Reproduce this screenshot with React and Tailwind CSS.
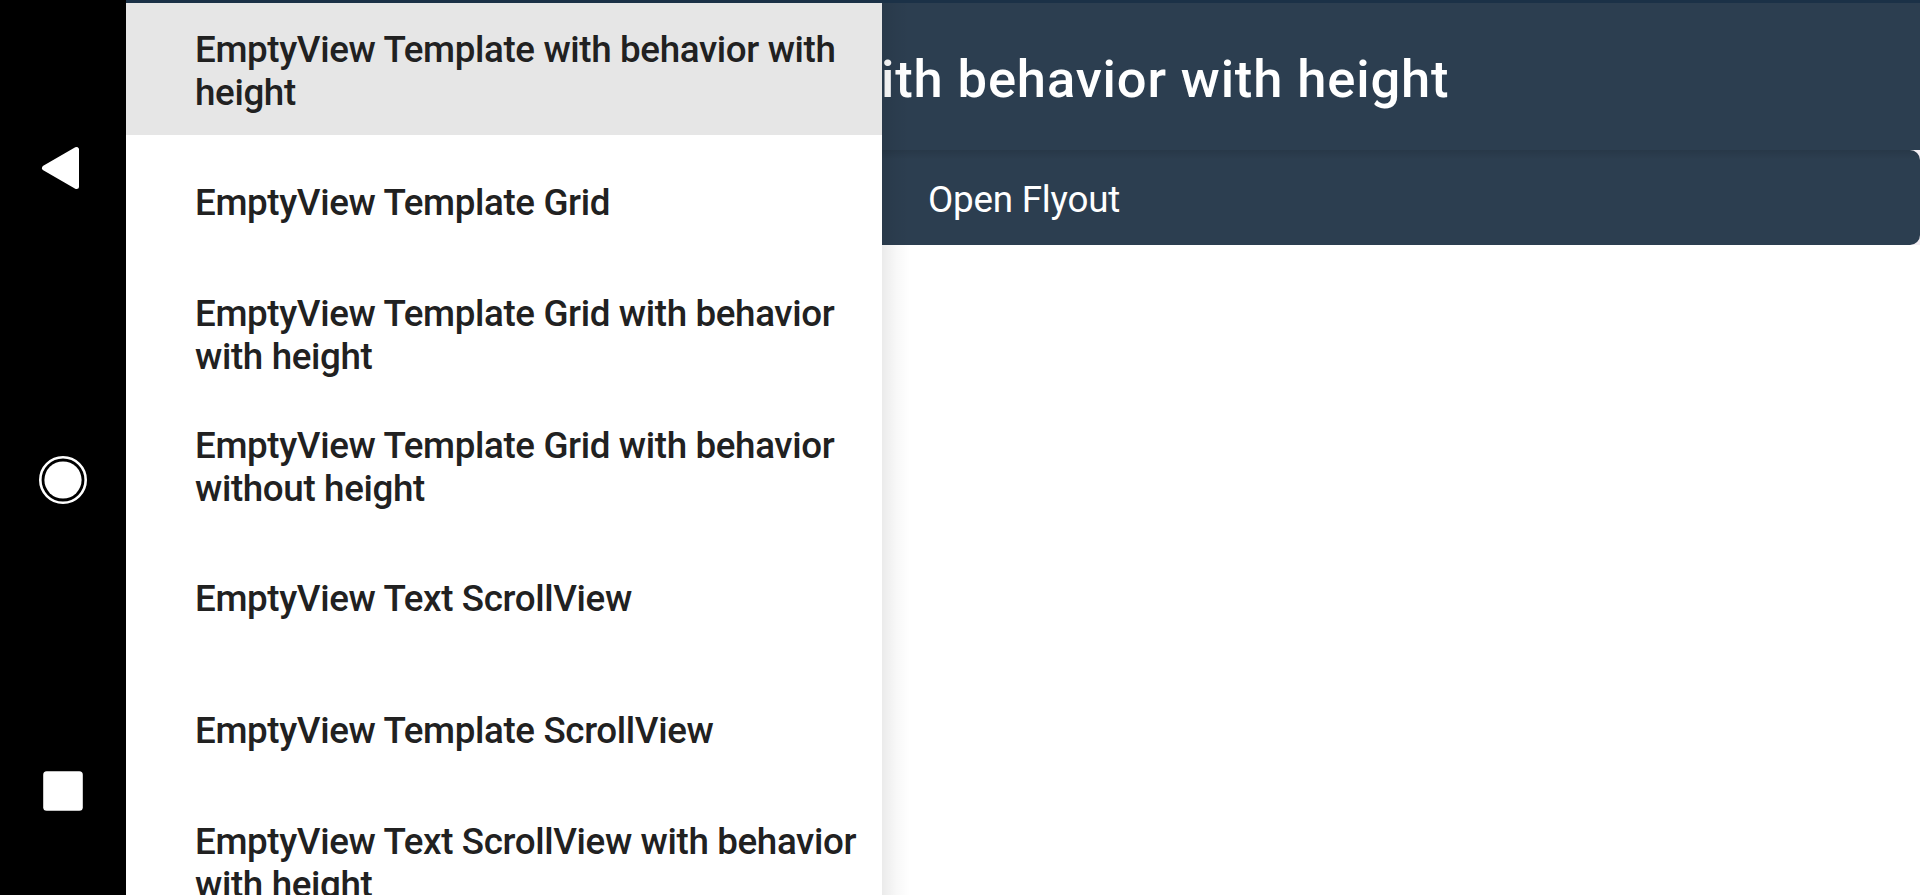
const items = [
  { label: 'EmptyView Template with behavior with height', active: true },
  { label: 'EmptyView Template Grid' },
  { label: 'EmptyView Template Grid with behavior with height' },
  { label: 'EmptyView Template Grid with behavior without height' },
  { label: 'EmptyView Text ScrollView' },
  { label: 'EmptyView Template ScrollView' },
  { label: 'EmptyView Text ScrollView with behavior with height' },
];

function NavigationBar() {
  return (
    <nav className="flex w-[126px] shrink-0 flex-col items-center bg-black pt-[128px]">
      <svg width="126" height="80" viewBox="0 0 126 80">
        <path d="M44.5 40 L76.5 21.5 L76.5 58.5 Z" fill="#fff" stroke="#fff" strokeWidth="5" strokeLinejoin="round" />
      </svg>
      <svg className="mt-[232px]" width="126" height="80" viewBox="0 0 126 80">
        <circle cx="63" cy="40" r="22.7" fill="none" stroke="#fff" strokeWidth="2.6" />
        <circle cx="63" cy="40" r="18.6" fill="#fff" />
      </svg>
      <svg className="mt-[231px]" width="126" height="80" viewBox="0 0 126 80">
        <rect x="43.2" y="20.2" width="39.6" height="39.6" rx="3.5" fill="#fff" />
      </svg>
    </nav>
  );
}

function Drawer() {
  return (
    <aside className="flex w-[756px] shrink-0 flex-col overflow-hidden bg-white">
      {items.map((item) => (
        <div
          key={item.label}
          className={
            item.active
              ? 'flex h-[132px] shrink-0 items-center bg-[#e6e6e6] pt-[3px] pr-4 pl-[69px]'
              : 'flex h-[132px] shrink-0 items-center pt-[3px] pr-4 pl-[69px]'
          }
        >
          <span className="text-[36.75px] leading-[43px] font-medium tracking-[-0.36px] text-[#212121]">{item.label}</span>
        </div>
      ))}
    </aside>
  );
}

function Page() {
  return (
    <main className="relative flex min-w-0 flex-1 flex-col overflow-hidden bg-white">
      <header className="flex h-[147px] shrink-0 items-center bg-[#2c3e50] pt-[5px]">
        <h1 className="-ml-px text-[52.5px] leading-[62px] font-medium tracking-[0.86px] whitespace-nowrap text-white">ith behavior with height</h1>
      </header>
      <div className="flex bg-[#f3eef3]">
        <div className="flex h-[95px] w-full items-center rounded-r-[10px] bg-[#2c3e50] bg-linear-to-b from-black/10 to-transparent to-10% pt-[4px] pl-[46px]">
          <span className="text-[36.75px] leading-[43px] tracking-[-0.22px] text-white">Open Flyout</span>
        </div>
      </div>
      <div className="absolute inset-y-0 left-0 w-7 bg-linear-to-r from-black/8 via-black/3 to-transparent" />
    </main>
  );
}

export default function App() {
  return (
    <div className="flex h-[895px] w-[1920px] overflow-hidden bg-white font-[Roboto,sans-serif]">
      <NavigationBar />
      <div className="flex min-w-0 flex-1 flex-col">
        <div className="h-[3px] shrink-0 bg-[#1b3147]" />
        <div className="flex min-h-0 flex-1">
          <Drawer />
          <Page />
        </div>
      </div>
    </div>
  );
}
